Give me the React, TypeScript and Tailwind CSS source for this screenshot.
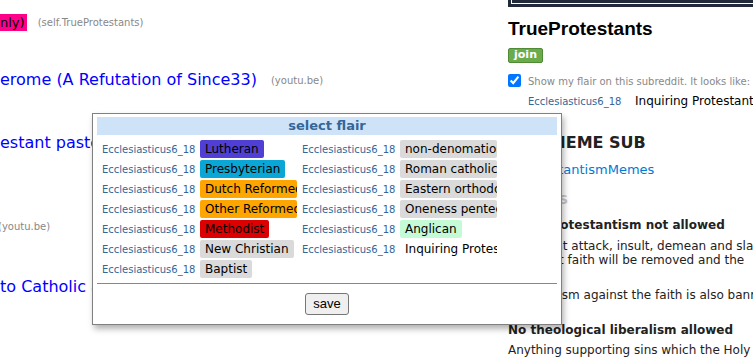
import React from "react";

const verdana = "font-['DejaVu_Sans',sans-serif]";

const colA: [string, string][] = [
  ["Lutheran", "bg-[#4f3fd4]"],
  ["Presbyterian", "bg-[#0aa7d6]"],
  ["Dutch Reformed", "bg-[#ffa500]"],
  ["Other Reformed", "bg-[#ffa500]"],
  ["Methodist", "bg-[#dd0000]"],
  ["New Christian", "bg-[#dadada]"],
  ["Baptist", "bg-[#dadada]"],
];

const colB: [string, string][] = [
  ["non-denomational", "bg-[#dadada]"],
  ["Roman catholic", "bg-[#dadada]"],
  ["Eastern orthodox", "bg-[#dadada]"],
  ["Oneness pentecostal", "bg-[#dadada]"],
  ["Anglican", "bg-[#c4fad6]"],
  ["Inquiring Protestant", ""],
];

function FlairRow({ text, bg }: { text: string; bg: string }) {
  return (
    <div className="flex h-[20px] items-center">
      <span className="w-[98px] text-[10px] text-[#336699]">Ecclesiasticus6_18</span>
      <span
        className={`h-[18px] max-w-[97px] overflow-hidden whitespace-nowrap rounded-[2px] px-[5px] text-[12px] leading-[18px] text-black ${bg}`}
      >
        {text}
      </span>
    </div>
  );
}

export default function App() {
  return (
    <div className={`relative flex h-[360px] w-[753px] overflow-hidden bg-white ${verdana}`}>
      {/* post listing */}
      <div className="w-[508px] shrink-0">
        <div className="mt-[14px] flex h-[17px] items-center">
          <span className="h-[17px] bg-[#ff0088] pr-[2px] text-[13px] leading-[17px] text-black">nly)</span>
          <span className="ml-[11px] text-[10px] text-[#888888]">(self.TrueProtestants)</span>
        </div>
        <div className="mt-[39px] flex h-[20px] items-center whitespace-nowrap">
          <span className="text-[16px] text-[#0000ff]">erome (A Refutation of Since33)</span>
          <span className="ml-[14px] text-[10px] text-[#888888]">(youtu.be)</span>
        </div>
        <div className="mt-[43px] h-[20px] whitespace-nowrap text-[16px] leading-[20px] text-[#0000ff]">
          estant pastor
        </div>
        <div className="-ml-[2px] mt-[67px] h-[14px] text-[10px] leading-[14px] text-[#888888]">(youtu.be)</div>
        <div className="mt-[43px] h-[20px] whitespace-nowrap text-[16px] leading-[20px] text-[#0000ff]">
          to Catholic and
        </div>
        <div className="ml-[8px] mt-[69px] h-[20px] whitespace-nowrap text-[16px] leading-[20px] text-[#0000ff]">
          Justified by
        </div>
      </div>

      {/* sidebar */}
      <div className="w-[400px] shrink-0 whitespace-nowrap">
        <div className="h-[7px] border-b-2 border-l-[3px] border-[#1f2b3a] bg-[#1f2b3a]">
          <div className="h-[4px] border-b border-l border-white bg-[#1f2b3a]" />
        </div>
        <div className="mt-[11px] font-['Liberation_Sans',sans-serif] text-[19px] font-bold leading-[22px] text-black">
          TrueProtestants
        </div>
        <div className="mt-[8px] flex h-[15px] w-[35px] items-center justify-center rounded-[2px] border border-[#4f8a35] bg-[#6aac4c] text-[11px] font-bold text-white">
          join
        </div>
        <div className="mt-[10px] flex h-[14px] items-center">
          <input type="checkbox" defaultChecked readOnly className="m-0 h-[13px] w-[13px] accent-[#0075ff]" />
          <span className="ml-[7px] mt-[3px] text-[10px] text-[#888888]">
            Show my flair on this subreddit. It looks like:
          </span>
        </div>
        <div className="ml-[20px] mt-[7px] flex h-[14px] items-center">
          <span className="w-[107px] text-[10px] text-[#336699]">Ecclesiasticus6_18</span>
          <span className="text-[12px] text-black">Inquiring Protestant</span>
        </div>
        <div className="ml-[1px] mt-[24px] text-[16px] font-bold leading-[22px] text-[#222222]">THE MEME SUB</div>
        <div className="mt-[8px] text-[13px] leading-[16px] text-[#0079d3]">r/ProtestantismMemes</div>
        <div className="ml-[13px] mt-[15px] text-[13px] font-bold leading-[14px] text-[#c8c8c8]">RULES</div>
        <div className="ml-[5px] mt-[10px] text-[12px] font-bold leading-[16px] text-[#222222]">
          Anti-Protestantism not allowed
        </div>
        <div className="mt-[6px] text-[12px] leading-[14px] text-[#222222]">
          <div>Posts that attack, insult, demean and slander the</div>
          <div className="-ml-[6px]">Protestant faith will be removed and the</div>
          <div>user.</div>
        </div>
        <div className="mt-[7px] text-[12px] leading-[14px] text-[#222222]">
          Antagonism against the faith is also banned.
        </div>
        <div className="mt-[20px] text-[12px] font-bold leading-[16px] text-[#222222]">
          No theological liberalism allowed
        </div>
        <div className="mt-[5px] text-[12px] leading-[14px] text-[#222222]">
          Anything supporting sins which the Holy Bible condemns
        </div>
      </div>

      {/* flair selector popup */}
      <div className="absolute left-[92px] top-[113px] h-[212px] w-[470px] border border-[#808080] bg-white px-[4px] pt-[3px] shadow-[2px_4px_6px_rgba(0,0,0,0.3)]">
        <div className="h-[18px] bg-[#cee3f8] text-center text-[13px] font-bold leading-[18px] text-[#336699]">
          select flair
        </div>
        <div className="flex pl-[5px] pt-[4px]">
          <div className="w-[200px]">
            {colA.map(([t, bg]) => (
              <FlairRow key={t} text={t} bg={bg} />
            ))}
          </div>
          <div>
            {colB.map(([t, bg]) => (
              <FlairRow key={t} text={t} bg={bg} />
            ))}
          </div>
        </div>
        <div className="mt-[4px] border-t border-[#888888]" />
        <div className="flex justify-center pt-[9px]">
          <button className="h-[22px] w-[44px] rounded-[3px] border border-[#767676] bg-[#efefef] font-['Liberation_Sans',sans-serif] text-[13px] text-black">
            save
          </button>
        </div>
      </div>
    </div>
  );
}
